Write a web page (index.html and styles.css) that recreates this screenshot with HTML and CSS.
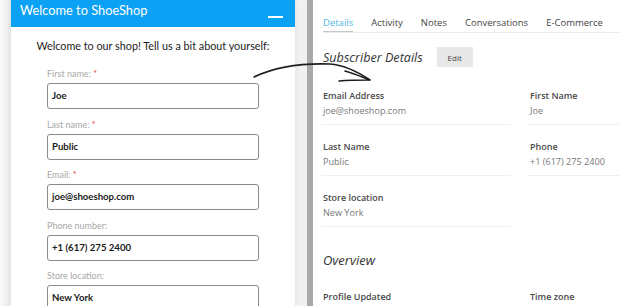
FILE: index.html
```html
<!DOCTYPE html>
<html lang="en">
<head>
  <meta charset="UTF-8" />
  <title>ShoeShop signup to subscriber details</title>
  <link rel="stylesheet" href="styles.css">
</head>
<body>
  <div class="stage">
    <div class="left-wrap">
      <div class="widget">
        <div class="widget-head">
          <span class="widget-title">Welcome to ShoeShop</span>
          <span class="minimize"></span>
        </div>
        <p class="intro">Welcome to our shop! Tell us a bit about yourself:</p>
        <div class="field">
          <label>First name: <span class="req">*</span></label>
          <div class="input">Joe</div>
        </div>
        <div class="field">
          <label>Last name: <span class="req">*</span></label>
          <div class="input">Public</div>
        </div>
        <div class="field">
          <label>Email: <span class="req">*</span></label>
          <div class="input">joe@shoeshop.com</div>
        </div>
        <div class="field">
          <label>Phone number:</label>
          <div class="input">+1 (617) 275 2400</div>
        </div>
        <div class="field">
          <label>Store location:</label>
          <div class="input">New York</div>
        </div>
      </div>
    </div>
    <div class="divider-bar"></div>
    <div class="crm">
      <div class="tabs">
        <span class="tab active">Details</span>
        <span class="tab">Activity</span>
        <span class="tab">Notes</span>
        <span class="tab">Conversations</span>
        <span class="tab">E-Commerce</span>
      </div>
      <div class="section-head">
        <h2>Subscriber Details</h2>
        <button class="edit-btn">Edit</button>
      </div>
      <div class="props">
        <div class="prop">
          <div class="prop-name">Email Address</div>
          <div class="prop-value">joe@shoeshop.com</div>
        </div>
        <div class="prop">
          <div class="prop-name">First Name</div>
          <div class="prop-value">Joe</div>
        </div>
        <div class="prop">
          <div class="prop-name">Last Name</div>
          <div class="prop-value">Public</div>
        </div>
        <div class="prop">
          <div class="prop-name">Phone</div>
          <div class="prop-value">+1 (617) 275 2400</div>
        </div>
        <div class="prop">
          <div class="prop-name">Store location</div>
          <div class="prop-value">New York</div>
        </div>
      </div>
      <h2 class="overview">Overview</h2>
      <div class="props plain">
        <div class="prop">
          <div class="prop-name">Profile Updated</div>
        </div>
        <div class="prop">
          <div class="prop-name">Time zone</div>
        </div>
      </div>
    </div>
  </div>

  <!-- hand drawn arrow from the form over to the CRM record -->
  <svg class="arrow" width="620" height="306" viewBox="0 0 620 306">
    <path d="M254 77 C 275 67, 300 63, 330 64 C 345 65, 358 72, 370 80" fill="none" stroke="#1e1e1e" stroke-width="1.6" stroke-linecap="round"/>
    <path d="M345 71 C 355 74, 362 77, 370 80 C 360 80, 350 80, 339 81" fill="none" stroke="#1e1e1e" stroke-width="1.6" stroke-linecap="round"/>
  </svg>
</body>
</html>
```

FILE: styles.css
```css
* {
  box-sizing: border-box;
}
body {
  margin: 0;
  width: 620px;
  height: 306px;
  overflow: hidden;
  background: #fff;
  position: relative;
}

.stage {
  display: flex;
  height: 306px;
  overflow: hidden;
}

/* left: the signup widget */
.left-wrap {
  flex: none;
  width: 307px;
  padding-left: 11px;
  background: linear-gradient(to right, #fbfbfb, #e9e9e9 11px, #f1f1f1 11px);
}
.widget {
  width: 284px;
  height: 100%;
  overflow: hidden;
  background: #fff;
  font-family: Lato, "Open Sans", sans-serif;
  box-shadow: 0 0 6px rgba(0, 0, 0, 0.08);
}
.widget-head {
  height: 27px;
  background: #0ba1f5;
  display: flex;
  align-items: center;
  justify-content: space-between;
  padding: 0 12px 0 9px;
}
.widget-title {
  color: #fff;
  font-size: 12.8px;
  margin-top: -7px;
}
.minimize {
  width: 15px;
  height: 2px;
  background: #fff;
  margin-top: 6px;
}
.intro {
  margin: 12px 0 15px;
  text-align: center;
  font-size: 10.8px;
  color: #1c1c1c;
}
.field {
  margin: 0 36px 0 36px;
  height: 50.6px;
}
.field label {
  display: block;
  font-size: 9px;
  color: #a8a8a8;
  height: 16px;
  line-height: 14px;
}
.req {
  color: #e04646;
}
.input {
  height: 26px;
  border: 1px solid #8a8a8a;
  border-radius: 3px;
  padding: 0 4px;
  font-size: 9.6px;
  font-weight: bold;
  color: #1a1a1a;
  line-height: 24px;
}

.divider-bar {
  flex: none;
  width: 6px;
  background: #a9a9a9;
}

/* right: the CRM record */
.crm {
  flex: 1;
  height: 306px;
  overflow: hidden;
  padding: 10px 0 0 10px;
  font-family: "Open Sans", sans-serif;
  color: #555;
}
.tabs {
  display: flex;
  gap: 18px;
  font-size: 9.5px;
  color: #444;
  border-bottom: 1px solid #ececec;
  height: 23px;
}
.tab {
  padding-top: 6px;
  border-bottom: 1px solid transparent;
}
.tab.active {
  color: #4fb6e2;
  border-bottom-color: #c8c8c8;
}
.section-head {
  display: flex;
  align-items: center;
  margin-top: 14px;
  gap: 14px;
}
.section-head h2,
.overview {
  margin: 0;
  font-size: 12.6px;
  font-weight: normal;
  font-style: italic;
  color: #333;
}
.edit-btn {
  border: 0;
  background: #e8e8e8;
  font-family: "Open Sans", sans-serif;
  font-size: 8px;
  color: #444;
  width: 36px;
  height: 20px;
  padding: 0;
}
.props {
  display: grid;
  grid-template-columns: 190px 110px;
  column-gap: 17px;
  row-gap: 14px;
  margin-top: 21px;
  margin-left: -2px;
}
.prop {
  height: 37px;
  padding-left: 2px;
  border-bottom: 1px solid #f0f0f0;
}
.prop-name {
  font-size: 9px;
  font-weight: 600;
  color: #4a4a4a;
  line-height: 15px;
}
.prop-value {
  font-size: 9.1px;
  color: #777;
  line-height: 15px;
}
.overview {
  margin-top: 24px;
  font-size: 13px;
}
.props.plain {
  margin-top: 20px;
}
.props.plain .prop {
  border-bottom: 0;
}

.arrow {
  position: absolute;
  left: 0;
  top: 0;
  pointer-events: none;
}
```
